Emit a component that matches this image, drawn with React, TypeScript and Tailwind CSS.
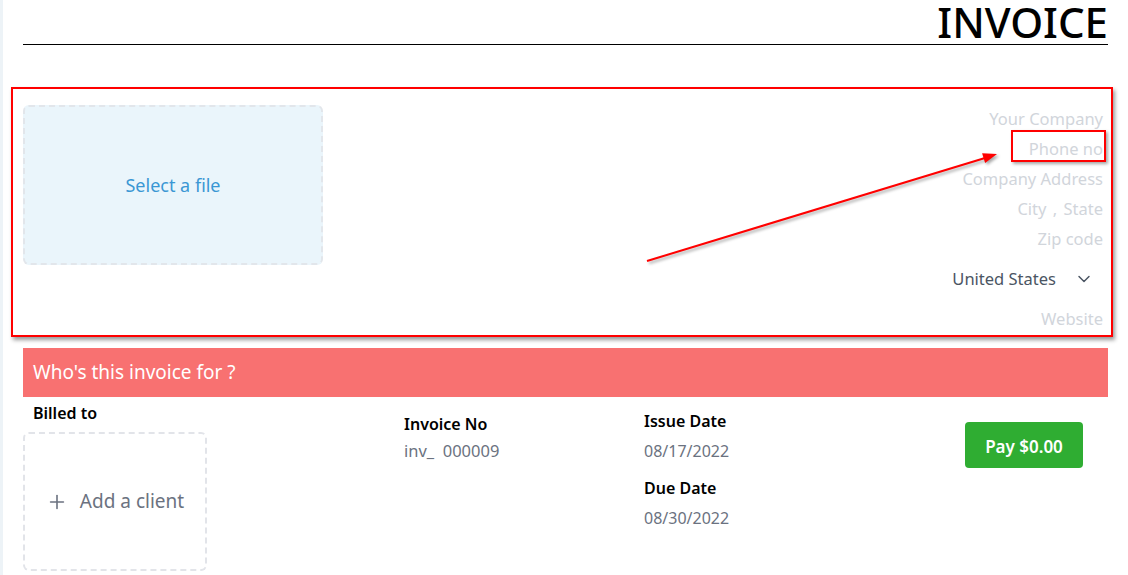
import { ChevronDown, Plus } from "lucide-react"

const companyFields = ["Your Company", "Phone no", "Company Address"]

function Arrow() {
  return (
    <svg
      className="pointer-events-none absolute left-0 top-0"
      width="1128"
      height="575"
      style={{ filter: "drop-shadow(2px 2px 1.5px rgba(0,0,0,0.35))" }}
    >
      <line x1="647" y1="261" x2="985" y2="158" stroke="#ff0000" strokeWidth="2" />
      <polygon points="997,154 985.1,162.9 982.1,153.3" fill="#ff0000" />
    </svg>
  )
}

export default function App() {
  return (
    <div className="relative flex min-h-[575px] bg-white font-['Noto_Sans',sans-serif]">
      <div className="w-[3px] shrink-0 bg-[#edf3f7]" />
      <div className="flex-1 pl-[20px] pr-[20px]">
        <div className="h-[45px] border-b border-black text-right">
          <h1 className="text-[42px] font-medium leading-[44px] text-black">INVOICE</h1>
        </div>

        <div className="mt-[42px] -ml-[12px] -mr-[5px] border-2 border-[#ff0000] pb-[1px] pl-[10px] pr-[8px] pt-[15px] shadow-[2px_3px_4px_rgba(0,0,0,0.4)]">
          <div className="flex justify-between">
            <div className="mt-[1px] flex h-[160px] w-[300px] items-center justify-center rounded-md border-2 border-dashed border-[#e2e6eb] bg-[#eaf5fb]">
              <span className="text-[18px] text-[#3a97d4]">Select a file</span>
            </div>
            <div className="flex flex-col items-end text-[16.5px] text-[#d1d5db]">
              {companyFields.map((f) =>
                f === "Phone no" ? (
                  <div key={f} className="relative h-[30px] leading-[30px]">
                    {f}
                    <span className="absolute -left-[18px] -right-[3px] top-[-4px] h-[32px] border-2 border-[#ff0000] shadow-[2px_2px_3px_rgba(0,0,0,0.35)]" />
                  </div>
                ) : (
                  <div key={f} className="h-[30px] leading-[30px]">
                    {f}
                  </div>
                )
              )}
              <div className="h-[30px] leading-[30px]">
                City <span className="mx-[2px]">,</span> State
              </div>
              <div className="h-[30px] leading-[30px]">Zip code</div>
              <div className="flex h-[50px] items-center text-[#4b5563]">
                <span>United States</span>
                <ChevronDown className="ml-[18px] mr-[9px] h-[20px] w-[20px]" strokeWidth={1.75} />
              </div>
              <div className="h-[30px] leading-[30px]">Website</div>
            </div>
          </div>
        </div>

        <div className="mt-[11px] flex h-[49px] items-center bg-[#f87171] pl-[10px] text-[19px] text-white">
          Who's this invoice for ?
        </div>

        <div className="flex">
          <div className="w-[381px] shrink-0">
            <div className="pl-[10px] pt-[5px] text-[16px] font-semibold leading-[22px] text-black">Billed to</div>
            <div className="mt-[8px] flex h-[139px] w-[184px] items-center justify-center gap-[12px] rounded-md border-2 border-dashed border-[#e2e4e9] text-[19px] text-[#6b7280]">
              <Plus className="h-[22px] w-[22px]" strokeWidth={1.75} />
              <span>Add a client</span>
            </div>
          </div>
          <div className="w-[240px] shrink-0 pt-[15px]">
            <div className="text-[16px] font-semibold leading-[24px] text-black">Invoice No</div>
            <div className="mt-[3px] text-[16.5px] leading-[24px] text-[#6b7280]">inv_&nbsp;&nbsp;000009</div>
          </div>
          <div className="flex-1 pt-[12px]">
            <div className="text-[16px] font-semibold leading-[24px] text-black">Issue Date</div>
            <div className="mt-[6px] text-[16px] leading-[24px] text-[#6b7280]">08/17/2022</div>
            <div className="mt-[13px] text-[16px] font-semibold leading-[24px] text-black">Due Date</div>
            <div className="mt-[6px] text-[16px] leading-[24px] text-[#6b7280]">08/30/2022</div>
          </div>
          <div className="pt-[25px] pr-[25px]">
            <button className="h-[46px] w-[118px] rounded-[4px] bg-[#2fad32] pt-[3px] text-[17px] font-semibold text-white">
              Pay $0.00
            </button>
          </div>
        </div>
      </div>
      <Arrow />
    </div>
  )
}
